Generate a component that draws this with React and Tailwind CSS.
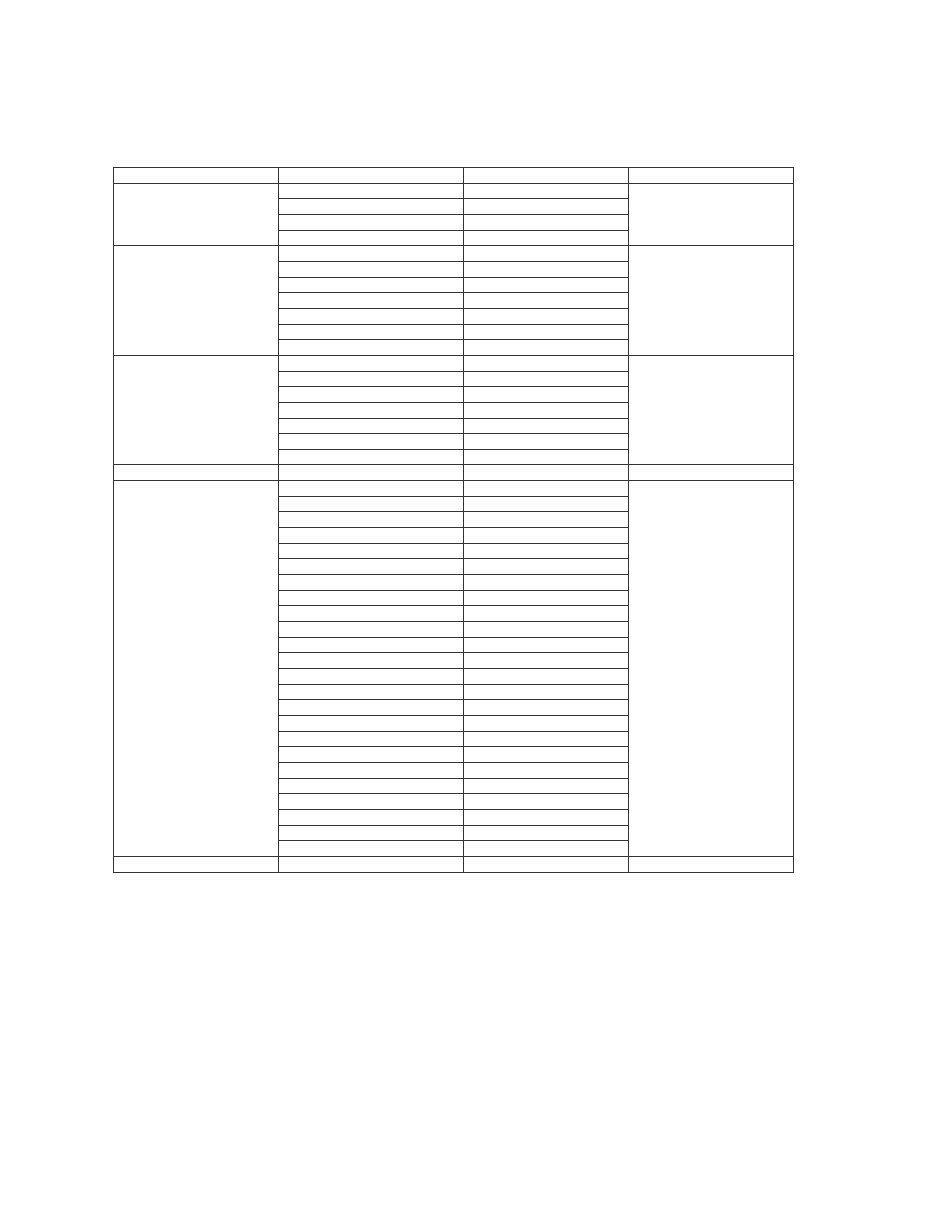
import React from 'react';

const groups = [1, 4, 7, 7, 1, 24, 1];

const spanClass = {
    1: 'row-span-1',
    4: 'row-span-4',
    7: 'row-span-7',
    24: 'row-span-24',
};

const App = () => {
    return (
        <div className="bg-white w-[935px] min-h-[1210px] pt-[167px] pl-[113px]" style={{ fontFamily: '"Liberation Sans", Arial, sans-serif' }}>
            <div className="grid w-fit grid-cols-[164px_184px_164px_164px] grid-rows-[repeat(45,14.667px)] gap-px p-px bg-[#333333]">
                {groups.map((n, g) => (
                    <React.Fragment key={g}>
                        <div className={`bg-white ${spanClass[n]}`} />
                        {Array.from({ length: n }).map((_, i) => (
                            <React.Fragment key={i}>
                                <div className="bg-white" />
                                <div className="bg-white" />
                                {i === 0 && <div className={`bg-white ${spanClass[n]}`} />}
                            </React.Fragment>
                        ))}
                    </React.Fragment>
                ))}
            </div>
        </div>
    );
};

export default App;
